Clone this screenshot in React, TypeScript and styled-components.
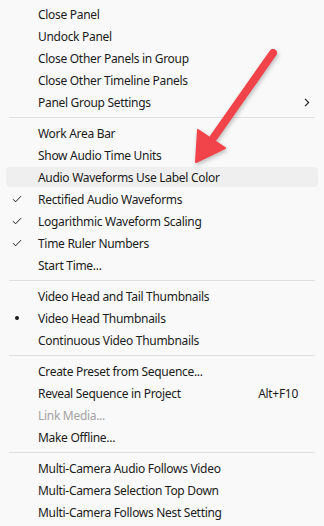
import React from "react";
import styled, { createGlobalStyle } from "styled-components";

const GlobalStyle = createGlobalStyle`
  html, body {
    margin: 0;
    padding: 0;
    background: #f9f9f9;
  }
`;

const Menu = styled.div`
  position: relative;
  width: 324px;
  height: 526px;
  box-sizing: border-box;
  padding: 3px 0 0;
  background: #f9f9f9;
  font-family: "Noto Sans", "Open Sans", sans-serif;
  font-size: 12px;
  letter-spacing: -0.3px;
  color: #1b1b1b;
  overflow: hidden;
`;

const Row = styled.div<{ $active?: boolean; $disabled?: boolean }>`
  display: grid;
  grid-template-columns: 38px 1fr auto 26px;
  align-items: center;
  height: 22px;
  position: relative;
  color: ${(p) => (p.$disabled ? "#a3a3a3" : "#1b1b1b")};

  &::before {
    content: "";
    display: ${(p) => (p.$active ? "block" : "none")};
    position: absolute;
    left: 6px;
    right: 6px;
    top: 1px;
    bottom: 1px;
    border-radius: 4px;
    background: #efefef;
  }
`;

const Mark = styled.span`
  position: relative;
  display: flex;
  justify-content: center;
  padding-right: 4px;
`;

const Label = styled.span`
  position: relative;
  white-space: nowrap;
`;

const Shortcut = styled.span`
  position: relative;
  white-space: nowrap;
`;

const Arrow = styled.span`
  position: relative;
  display: flex;
  justify-content: flex-start;
  padding-left: 6px;
`;

const Separator = styled.div`
  height: 1px;
  margin: 4px 9px;
  background: #e0e0e0;
`;

const Dot = styled.span`
  width: 4px;
  height: 4px;
  border-radius: 50%;
  background: #1b1b1b;
`;

const Annotation = styled.svg`
  position: absolute;
  left: 0;
  top: 0;
  pointer-events: none;
  filter: drop-shadow(1px 2px 2px rgba(0, 0, 0, 0.25));
`;

type Item = {
  label?: string;
  mark?: "check" | "dot";
  shortcut?: string;
  submenu?: boolean;
  disabled?: boolean;
  active?: boolean;
  sep?: boolean;
};

const ITEMS: Item[] = [
  { label: "Close Panel" },
  { label: "Undock Panel" },
  { label: "Close Other Panels in Group" },
  { label: "Close Other Timeline Panels" },
  { label: "Panel Group Settings", submenu: true },
  { sep: true },
  { label: "Work Area Bar" },
  { label: "Show Audio Time Units" },
  { label: "Audio Waveforms Use Label Color", active: true },
  { label: "Rectified Audio Waveforms", mark: "check" },
  { label: "Logarithmic Waveform Scaling", mark: "check" },
  { label: "Time Ruler Numbers", mark: "check" },
  { label: "Start Time..." },
  { sep: true },
  { label: "Video Head and Tail Thumbnails" },
  { label: "Video Head Thumbnails", mark: "dot" },
  { label: "Continuous Video Thumbnails" },
  { sep: true },
  { label: "Create Preset from Sequence..." },
  { label: "Reveal Sequence in Project", shortcut: "Alt+F10" },
  { label: "Link Media...", disabled: true },
  { label: "Make Offline..." },
  { sep: true },
  { label: "Multi-Camera Audio Follows Video" },
  { label: "Multi-Camera Selection Top Down" },
  { label: "Multi-Camera Follows Nest Setting" },
];

function Check() {
  return (
    <svg width="10" height="8" viewBox="0 0 10 8">
      <path d="M1 4.2 L3.6 6.8 L9 1.2" fill="none" stroke="#1b1b1b" strokeWidth="1" />
    </svg>
  );
}

function Chevron() {
  return (
    <svg width="6" height="9" viewBox="0 0 6 9">
      <path d="M1 0.8 L4.7 4.5 L1 8.2" fill="none" stroke="#1b1b1b" strokeWidth="1.1" />
    </svg>
  );
}

export default function App() {
  return (
    <>
      <GlobalStyle />
      <Menu>
        {ITEMS.map((item, i) =>
          item.sep ? (
            <Separator key={i} />
          ) : (
            <Row key={i} $active={item.active} $disabled={item.disabled}>
              <Mark>
                {item.mark === "check" && <Check />}
                {item.mark === "dot" && <Dot />}
              </Mark>
              <Label>{item.label}</Label>
              <Shortcut>{item.shortcut}</Shortcut>
              <Arrow>{item.submenu && <Chevron />}</Arrow>
            </Row>
          )
        )}
        <Annotation width="324" height="526" viewBox="0 0 324 526">
          <line x1="273" y1="53" x2="214" y2="137" stroke="#f1434a" strokeWidth="8" strokeLinecap="round" />
          <polygon points="196,162 198,130 225,148" fill="#f1434a" stroke="#f1434a" strokeWidth="2" strokeLinejoin="round" />
        </Annotation>
      </Menu>
    </>
  );
}
